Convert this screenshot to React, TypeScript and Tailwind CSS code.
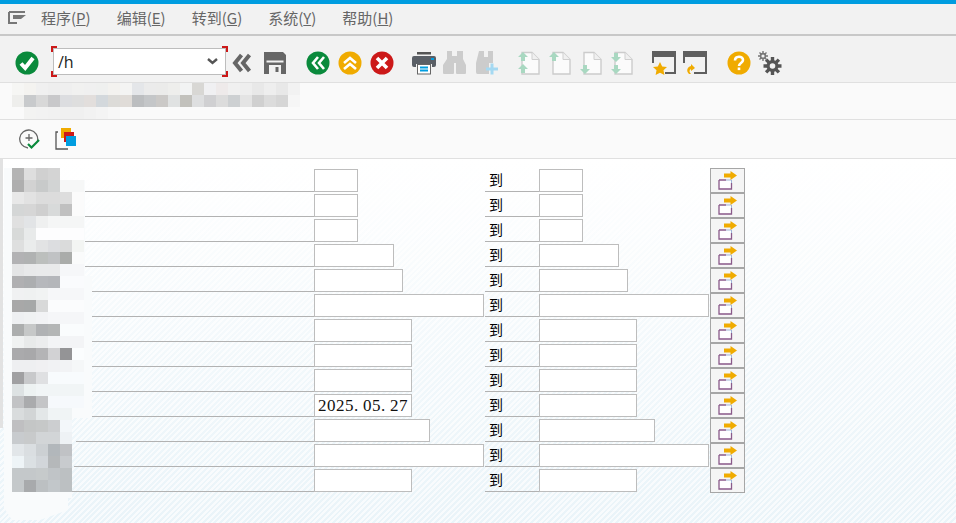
import React from "react";

const G = "#0a8a3c", Y = "#f0ab00", R = "#cc1919", D = "#666666", P = "#a9d8c1";

function Circle({ c, children }: { c: string; children: React.ReactNode }) {
  return (
    <svg width="24" height="24" viewBox="0 0 24 24" className="shrink-0">
      <circle cx="12" cy="12" r="11.5" fill={c} />
      {children}
    </svg>
  );
}

function Page({ up, down, two, px = 5 }: { up?: boolean; down?: boolean; two?: boolean; px?: number }) {
  const arrow = (y: number, dir: number, x: number) => (
    <path d={dir < 0 ? `M${x} ${y}l5 5h-3v4h-4v-4h-3z` : `M${x} ${y}l5 -5h-3v-4h-4v4h-3z`} fill={P} />
  );
  return (
    <svg width="24" height="24" viewBox="0 0 24 24" className="shrink-0">
      <path d={`M${px} 1.5h10l7 7v14.5H${px}z`} fill="#fbfbfb" stroke="#cccccc" strokeWidth="1.4" />
      <path d={`M${px + 10} 1.5v7h7`} fill="#f0f0f0" stroke="#cfcfcf" strokeWidth="1" />
      {two && up && (<>{arrow(1, -1, 6)}{arrow(13, -1, 6)}</>)}
      {two && down && (<>{arrow(11, 1, 6)}{arrow(23, 1, 6)}</>)}
      {!two && up && arrow(1, -1, 6)}
      {!two && down && arrow(23, 1, 6)}
    </svg>
  );
}

function Binoculars({ plus }: { plus?: boolean }) {
  return (
    <svg width="24" height="24" viewBox="0 0 24 24" className="shrink-0">
      {plus ? (
        <path d="M3 0h5v6h4V0h5v12h-4v11H1.5Q0 23 0 21V12z" fill="#cccccc" />
      ) : (
        <path d="M4 0h5v5h5V0h6v8l3 6v8q0 1-1 1H14q-1 0-1-1V12h-2v10q0 1-1 1H1q-1 0-1-1v-8l4-6z" fill="#cccccc" />
      )}
      {plus && <path d="M10 18h12M16 12.5v11" stroke="#a5d9f2" strokeWidth="3" fill="none" />}
    </svg>
  );
}

function CommandDropdown() {
  return (
    <div className="relative mb-[3px] ml-[12px] h-[31px] w-[177px] shrink-0 p-[2px]">
      <span className="absolute left-0 top-0 h-[6px] w-[6px] border-l-2 border-t-2 border-[#cc1919]" />
      <span className="absolute right-0 top-0 h-[6px] w-[6px] border-r-2 border-t-2 border-[#cc1919]" />
      <span className="absolute bottom-0 left-0 h-[6px] w-[6px] border-b-2 border-l-2 border-[#cc1919]" />
      <span className="absolute bottom-0 right-0 h-[6px] w-[6px] border-b-2 border-r-2 border-[#cc1919]" />
      <div className="relative flex h-full items-center justify-between border border-[#bdbdbd] bg-white pl-[4px] pr-[7px]">
        <span className="text-[16px] leading-none text-[#222] [font-family:'Open_Sans',sans-serif]">/h</span>
        <svg width="11" height="7" viewBox="0 0 11 7"><path d="M1 1l4.5 4L10 1" fill="none" stroke="#555" strokeWidth="2.4" /></svg>
      </div>
    </div>
  );
}

function Toolbar() {
  return (
    <div className="flex h-[46px] items-center bg-[#f2f2f2] pt-[8px]">
      <div className="ml-[15px]">
        <Circle c={G}><path d="M6 12.5l4.2 4.5L18 7" fill="none" stroke="#fff" strokeWidth="4" /></Circle>
      </div>
      <CommandDropdown />
      <svg width="20" height="20" viewBox="0 0 20 20" className="ml-[4px]"><path d="M9.5 2L3 10l6.5 8M17.5 2L11 10l6.5 8" fill="none" stroke="#666" strokeWidth="4" /></svg>
      <svg width="24" height="24" viewBox="0 0 24 24" className="ml-[11px]">
        <path d="M1 1h19l3 3v19H1z" fill={D} />
        <rect x="3.5" y="9.5" width="17" height="2" fill="#f2f2f2" />
        <rect x="6" y="14" width="12" height="9" fill="#f2f2f2" />
        <rect x="12.5" y="16" width="3" height="5" fill={D} />
      </svg>
      <div className="ml-[19px] flex items-center gap-[8px]">
        <Circle c={G}><path d="M12 6l-5 6 5 6M18 6l-5 6 5 6" fill="none" stroke="#fff" strokeWidth="2.6" /></Circle>
        <Circle c={Y}><path d="M6 12l6-5 6 5M6 18l6-5 6 5" fill="none" stroke="#fff" strokeWidth="2.6" /></Circle>
        <Circle c={R}><path d="M7 7l10 10M17 7L7 17" fill="none" stroke="#fff" strokeWidth="3.6" /></Circle>
      </div>
      <svg width="24" height="24" viewBox="0 0 24 24" className="ml-[18px]">
        <path d="M5 3.5V1h14v2.5z" fill="#555" />
        <path d="M2 5h20a2 2 0 0 1 2 2v7a2 2 0 0 1-2 2h-2v-3H4v3H2a2 2 0 0 1-2-2V7a2 2 0 0 1 2-2z" fill="#5a5f66" />
        <rect x="19" y="7" width="3" height="2" fill="#009de0" />
        <rect x="5.5" y="13.5" width="13" height="9.5" fill="#fff" stroke="#666" />
        <path d="M8 16.5h8M8 19.5h8" stroke="#009de0" strokeWidth="2" />
      </svg>
      <div className="ml-[7px]"><Binoculars /></div>
      <div className="ml-[9px]"><Binoculars plus /></div>
      <div className="ml-[17px] flex items-center gap-[7px]">
        <Page up two />
        <Page up />
        <Page down />
        <Page down two />
      </div>
      <svg width="24" height="24" viewBox="0 0 24 24" className="ml-[18px]">
        <path d="M0 0h24v23H13v-2h9V6H2v6H0z" fill="#5f5f5f" />
        <path d="M8 11l2.2 4.4 4.8.6-3.5 3.3.9 4.7L8 21.7 3.6 24l.9-4.7L1 16l4.8-.6z" fill={Y} />
      </svg>
      <svg width="24" height="24" viewBox="0 0 24 24" className="ml-[7px]">
        <path d="M0 0h24v23H11v-2h11V6H2v6H0z" fill="#5f5f5f" />
        <path d="M6 23c-3-3-2-7 2-8v-2l4 4-4 3v-2c-2 1-2 3 0 5z" fill={Y} />
      </svg>
      <div className="ml-[20px]">
        <Circle c={Y}>
          <path d="M8 9.5c0-5 8-5 8-.5 0 3-4 3-4 6" fill="none" stroke="#fff" strokeWidth="2.6" />
          <rect x="10.7" y="16.5" width="2.6" height="2.6" fill="#fff" />
        </Circle>
      </div>
      <svg width="24" height="24" viewBox="0 0 24 24" className="ml-[7px]">
        <g transform="translate(14.5 15)">
          <path d="M0-9V9M-9 0H9M-6.4-6.4L6.4 6.4M6.4-6.4L-6.4 6.4" stroke="#555" strokeWidth="3.4" />
          <circle r="6" fill="#555" />
          <circle r="2.8" fill="#f2f2f2" />
        </g>
        <g transform="translate(5 5)">
          <path d="M0-5V5M-5 0H5M-3.5-3.5L3.5 3.5M3.5-3.5L-3.5 3.5" stroke="#777" strokeWidth="1.4" />
          <circle r="3.2" fill="#777" />
          <circle r="1.6" fill="#f2f2f2" />
        </g>
      </svg>
    </div>
  );
}

const menus: [string, string][] = [["程序", "P"], ["编辑", "E"], ["转到", "G"], ["系统", "Y"], ["帮助", "H"]];

function MenuBar() {
  return (
    <div className="flex h-[32px] items-center border-b-[2px] border-[#c8c8c8] bg-[#f2f2f2] pb-[4px]">
      <svg width="18" height="13" viewBox="0 0 18 13" className="ml-[8px] shrink-0">
        <path d="M1 1h16M1 1v11h8" fill="none" stroke="#777" strokeWidth="2" />
        <path d="M5 4h13l-5 4H5z" fill="#777" />
      </svg>
      <div className="ml-[15px] flex gap-[26px] text-[15px] leading-none text-[#666]">
        {menus.map(([t, k]) => (
          <span key={k}>
            {t}(<span className="underline">{k}</span>)
          </span>
        ))}
      </div>
    </div>
  );
}

const titleRows: [number, string[]][] = [
  [84, ["#f6f6f4", "#f4f3f0", "#f0f0f0", "#eeeeee", "#efefef", "#f1f1f0", "#f0f0f0", "#eff0ef", "#f3f2ef", "#f4f4f3", "#e4e6e9", "#ebebeb", "#ebebea", "#eeeeec", "#f2f3f3", "#d8d7d4", "#f0f0f2", "#eeeaea", "#f0f0f0", "#eeeeee", "#e8e8e8", "#eeeeee", "#e8e8e8", "#f2f2f2"]],
  [96, ["#eeeeec", "#c8cacc", "#d8d8d8", "#c8c8ca", "#dcdde0", "#dedede", "#e2dedc", "#d3d8dc", "#dcdbd8", "#e0dcd8", "#bcbec0", "#c4c6c8", "#cbc9c7", "#e0e2e2", "#c2c1bc", "#dedfe0", "#d0d0d2", "#dcdcdc", "#cdd0d2", "#e4e4e4", "#d0d0d0", "#dcdcdc", "#d6d6d6", "#f6f6f6"]],
  [108, ["#fafafa", "#f3f3f2", "#f2f2f2", "#f1f1f1", "#f0f0f0", "#f0f0f0", "#f2f2f2", "#f4f4f4", "#f7f7f7"]],
];

function TitleBlur() {
  return (
    <svg width="300" height="36" viewBox="0 84 300 36" className="absolute left-0 top-0">
      {titleRows.map(([y, cells]) =>
        cells.map((c, i) => <rect key={`${y}-${i}`} x={12 + i * 12} y={y} width="12" height="12" fill={c} />)
      )}
    </svg>
  );
}

function AppToolbar() {
  return (
    <div className="flex h-[38px] items-center gap-[15px] bg-[#fafafa] pl-[19px]">
      <svg width="21" height="21" viewBox="0 0 21 21">
        <path d="M18.5 12A9 9 0 1 0 9 19" fill="none" stroke="#666" strokeWidth="1.3" />
        <path d="M10 5v7M6.5 9h7" fill="none" stroke="#666" strokeWidth="1.3" />
        <path d="M9 15l3.5 3.5L20 11" fill="none" stroke="#0a8a3c" strokeWidth="2.2" />
      </svg>
      <svg width="22" height="22" viewBox="0 0 22 22">
        <path d="M3 4H1v17h12" fill="none" stroke="#555" strokeWidth="1.3" />
        <rect x="6" y="0" width="10" height="10" fill={Y} />
        <rect x="9" y="4" width="10" height="10" fill={R} />
        <rect x="11" y="8" width="10" height="10" fill="#009de0" />
      </svg>
    </div>
  );
}

type Row = { line: number; w1: number; w2: number; v?: string };
const rows: Row[] = [
  { line: 85, w1: 44, w2: 44 },
  { line: 84, w1: 44, w2: 44 },
  { line: 84, w1: 44, w2: 44 },
  { line: 83, w1: 80, w2: 80 },
  { line: 83, w1: 89, w2: 89 },
  { line: 86, w1: 170, w2: 170 },
  { line: 91, w1: 98, w2: 98 },
  { line: 90, w1: 98, w2: 98 },
  { line: 86, w1: 98, w2: 98 },
  { line: 77, w1: 98, w2: 98, v: "2025.05.27" },
  { line: 76, w1: 116, w2: 116 },
  { line: 74, w1: 170, w2: 170 },
  { line: 69, w1: 98, w2: 98 },
];

const blur: string[][] = [
  ["#b4b4b4", "#dedede", "#d0d0d0", "#d4d4d4"],
  ["#aeaeae", "#d2d2d2", "#c8caca", "#d2d4d4", "#f6f7f7", "#f6f7f7"],
  ["#e8e8e8", "#e2e2e2", "#dcdcdc", "#dcdcdc", "#dddddd", "#fbfbfb"],
  ["#d4d6d6", "#d6d6d6", "#cfcfcf", "#d8dada", "#c0c0c0", "#fbfbfb"],
  ["#e0e0e0", "#e2e4e6", "#eff0f0", "#f5f6f6", "#f5f6f6", "#f5f6f6"],
  ["#d8dad9", "#e8eaea", "#fdfdfe", "#fdfdfe", "#fdfdfe", "#fdfdfe"],
  ["#dedfdf", "#eaecec", "#e2e3e4", "#dcdde0", "#dadbdb", "#f3f5f3"],
  ["#b2b2b4", "#b0b2b2", "#bcbfbd", "#c0c2c4", "#aaacaa", "#fafbfb"],
  ["#e4e5e6", "#e8e9ea", "#e9eaeb", "#e9eaeb", "#f6f7f9", "#f6f7f9"],
  ["#b0b0b2", "#acaeb0", "#b6b8bc", "#b4b6ba", "#fafbfd", "#fafbfd"],
  ["#f0f1f2", "#eff1f1", "#f1f3f3", "#f6f7f9", "#f6f7f9", "#f6f7f9"],
  ["#a8a8a8", "#a6a8a8", "#d8d9d9", "#fbfcfd", "#fbfcfd", "#fbfcfd"],
  ["#eef0f2", "#f0f2f3", "#f2f3f5", "#f5f6f8", "#f5f6f8", "#f5f6f8"],
  ["#acaeae", "#c6c8c8", "#b0b2b4", "#b4b6b6", "#fafcfd", "#fafcfd"],
  ["#f0f2f2", "#e8eaea", "#ecedee", "#f3f4f6", "#f3f4f6", "#f3f4f6"],
  ["#aaaaac", "#a8a8aa", "#b4b4b6", "#d2d2d4", "#949496", "#fbfdfe"],
  ["#eeeff1", "#eeeff1", "#f0f0f2", "#f1f2f4", "#f2f3f5", "#f5f7f8"],
  ["#a0a0a2", "#c8c9cb", "#dfe0e2", "#f8fbfd", "#f8fbfd", "#f8fbfd"],
  ["#dde2e3", "#edf2f2", "#f1f5f6", "#f1f5f6", "#f1f5f6", "#f1f5f6"],
  ["#c2c3c5", "#aaabad", "#c4c5c7", "#f6f9fc", "#f6f9fc", "#f6f9fc"],
  ["#d9dcdd", "#d2d5d6", "#e3e7e8", "#f0f4f5", "#f0f4f5"],
  ["#bfbfc1", "#c4c6c6", "#c6c8c8", "#ccced0", "#f3f7fa"],
  ["#c8cbce", "#c8cacb", "#d2d5d7", "#d2d5d7", "#eef2f5"],
  ["#e2e6e9", "#dadee1", "#ccd0d3", "#b2b7bb", "#c0c2c5"],
  ["#eef4f7", "#dbe0e3", "#d2d6da", "#b5b8ba", "#c8cbce"],
  ["#c4c8ca", "#c4c8ca", "#c6cacb", "#c0c4c7", "#bcc0c2"],
  ["#c4c8ca", "#a8aaac", "#bcc0c2", "#c2c7ca", "#bcc0c2"],
];

function LabelBlur() {
  return (
    <svg width="96" height="364" viewBox="0 0 96 364" className="absolute left-0 top-[9px]">
      <path d="M4 0H60V12H85V108H92V250H72V330H68V342L40 352H12L4 340z" fill="#f9fbfc" />
      {blur.map((row, r) =>
        row.map((c, i) => <rect key={`${r}-${i}`} x={12 + i * 12} y={r * 12} width={12} height={12} fill={c} />)
      )}
    </svg>
  );
}

function ExtButton() {
  return (
    <div className="flex h-[25px] w-[35px] shrink-0 items-center justify-center border border-[#a6a6a6] bg-[#f5f5f5]">
      <svg width="22" height="21" viewBox="0 0 22 21">
        <rect x="2.6" y="10" width="11.4" height="8.5" fill="#fff" />
        <path d="M2 10h7M2 10v9h12.5v-6" fill="none" stroke="#8a5a8a" strokeWidth="1.3" />
        <path d="M9 10h5.5v3" fill="none" stroke="#9fb5d8" strokeWidth="1" />
        <path d="M7 3.5h6.5V1l6.5 4.5L13.5 10V7.5H7z" fill={Y} />
      </svg>
    </div>
  );
}

function Field({ w, v }: { w: number; v?: string }) {
  return (
    <div
      className="mt-[1px] flex h-[23px] items-center border border-[#bdbdbd] bg-white pl-[3px] text-[17px] text-[#111] [font-family:'Liberation_Serif',serif]"
      style={{ width: w }}
    >
      {v?.split("").map((ch, i) => (
        <span key={i} className="inline-block w-[9px]">{ch}</span>
      ))}
    </div>
  );
}

function FormRow({ r }: { r: Row }) {
  return (
    <div className="flex h-[25px]">
      <div className="flex w-[314px] shrink-0 justify-end">
        <div className="h-[24px] border-b border-[#b2b2b2]" style={{ width: 314 - r.line }} />
      </div>
      <div className="w-[171px] shrink-0"><Field w={r.w1} v={r.v} /></div>
      <div className="h-[24px] w-[54px] shrink-0 border-b border-[#b2b2b2] pl-[4px] pt-[1px] text-[14px] leading-[20px] text-black">到</div>
      <div className="w-[171px] shrink-0"><Field w={r.w2} /></div>
      <ExtButton />
    </div>
  );
}

export default function App() {
  return (
    <div className="flex h-[523px] w-[956px] flex-col overflow-hidden border-t-[4px] border-[#009de0] bg-white [font-family:'Noto_Sans_CJK_SC','Noto_Sans',sans-serif]">
      <MenuBar />
      <Toolbar />
      <div className="relative h-[37px] border-t border-[#e0e0e0] bg-[#fafafa]">
        <TitleBlur />
      </div>
      <div className="border-t border-[#e0e0e0]"><AppToolbar /></div>
      <div className="relative flex-1 border-t border-[#e0e0e0] bg-[linear-gradient(to_bottom,#ffffff_0%,#ffffffee_8%,#ffffff55_60%,#ffffff00_100%),repeating-linear-gradient(135deg,#eaf4f9_0px,#eaf4f9_2px,#f8fbfd_2px,#f8fbfd_4px)] pt-[9px]">
        <span className="absolute bottom-[95px] left-0 top-0 w-[3px] bg-[#e2e2e2]" />
        <LabelBlur />
        {rows.map((r, i) => <FormRow key={i} r={r} />)}
      </div>
    </div>
  );
}
